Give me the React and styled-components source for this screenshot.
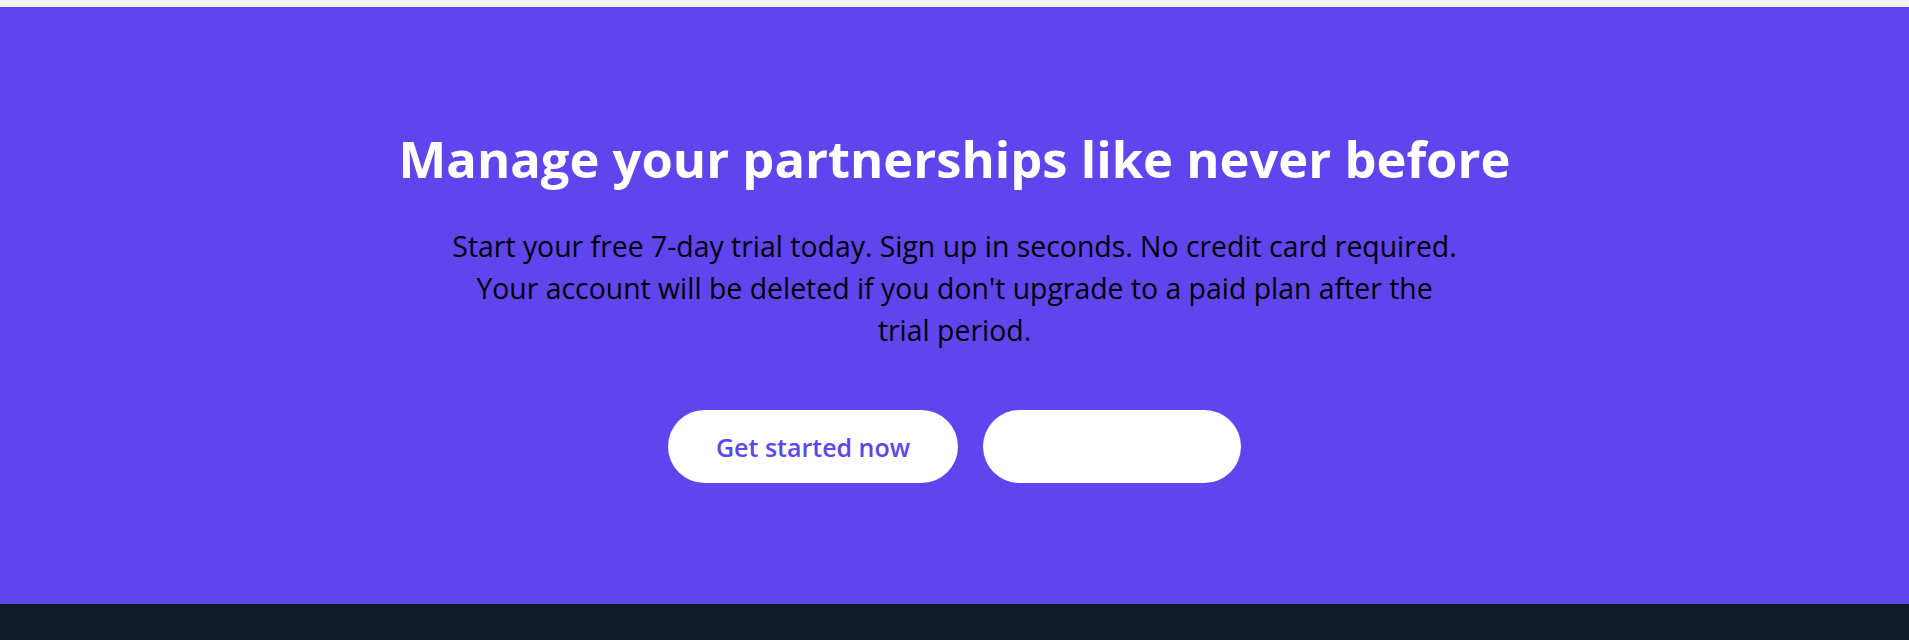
import styled, { createGlobalStyle } from 'styled-components';

const GlobalStyle = createGlobalStyle`
    body {
        margin: 0;
        background: #f3f6f9;
        font-family: "Open Sans", "Noto Sans", sans-serif;
    }
`;

const Page = styled.div`
    display: flex;
    flex-direction: column;
    min-height: 640px;
`;

const TopStrip = styled.div`
    height: 7px;
    background: #f3f6f9;
`;

const CtaSection = styled.section`
    background: #6045ee;
    display: flex;
    flex-direction: column;
    align-items: center;
    padding: 121px 24px 121px;
`;

const Heading = styled.h2`
    margin: 0;
    color: #ffffff;
    font-size: 50.7px;
    line-height: 61px;
    font-weight: 700;
    text-align: center;
`;

const Lead = styled.p`
    margin: 36px 0 0;
    max-width: 1012px;
    color: #000000;
    font-size: 28.4px;
    line-height: 42px;
    text-align: center;
`;

const Actions = styled.div`
    display: flex;
    gap: 25px;
    margin-top: 59px;
`;

const PillButton = styled.a`
    display: flex;
    align-items: center;
    justify-content: center;
    height: 73px;
    padding: 0 ${(props) => props.$padX}px;
    border-radius: 999px;
    background: #ffffff;
    color: ${(props) => props.$textColor};
    font-size: 25px;
    font-weight: 600;
    text-decoration: none;
`;

const Footer = styled.footer`
    flex: 1;
    background: #111827;
`;

export default function App() {
    return (
        <>
            <GlobalStyle />
            <Page>
                <TopStrip />
                <CtaSection>
                    <Heading>Manage your partnerships like never before</Heading>
                    <Lead>
                        Start your free 7-day trial today. Sign up in seconds. No credit card required.
                        Your account will be deleted if you don't upgrade to a paid plan after the trial period.
                    </Lead>
                    <Actions>
                        <PillButton href="#" $textColor="#6045ee" $padX={48}>Get started now</PillButton>
                        <PillButton href="#" $textColor="#ffffff" $padX={50}>Book a demo</PillButton>
                    </Actions>
                </CtaSection>
                <Footer />
            </Page>
        </>
    );
}
